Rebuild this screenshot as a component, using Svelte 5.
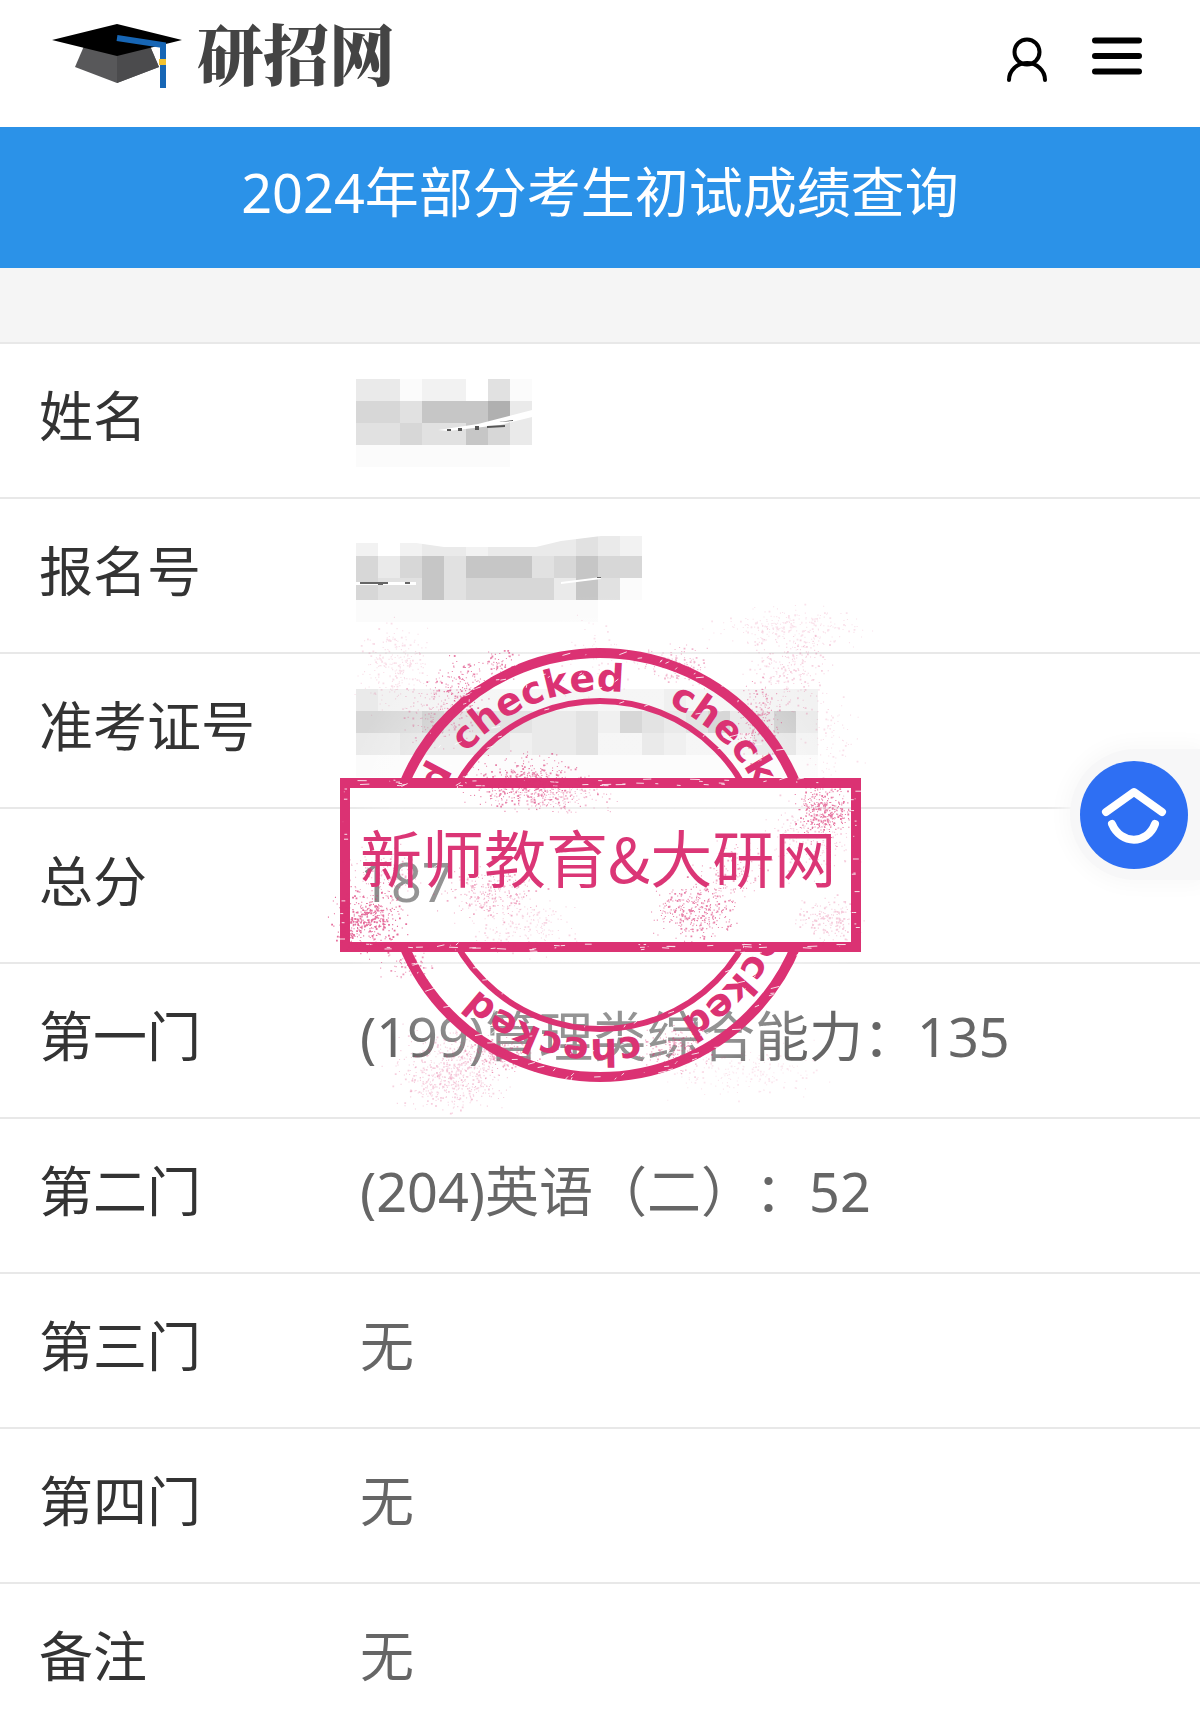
<script lang="ts">
	type Mosaic = { cells: string[]; name: string };
	type Row = { label: string; value?: string; mosaic?: Mosaic };

	// Each letter is one shade of the pixelated block, '.' is left empty
	const shades: Record<string, string> = {
		a: '#fbfbfb',
		b: '#f2f2f2',
		c: '#eaeaea',
		d: '#e1e1e1',
		e: '#d7d7d7',
		f: '#c6c6c6',
		g: '#b0b0b0'
	};

	const rows: Row[] = [
		{ label: '姓名', mosaic: { name: 'short', cells: ['ccabb.da', 'eedfffgc', 'ddeddfec', 'aaaaaaa.'] } },
		{ label: '报名号', mosaic: { name: 'medium', cells: ['b.bccbccccdcb', 'ecefdfffdefee', 'eddfdeeeecfda', 'aaaaaaaaaaa..'] } },
		{ label: '准考证号', mosaic: { name: 'long', cells: ['cbbbbbbbbbbbbbcbbbbbb', 'eeefeeeeddecfedefddfc', 'ccdddddcddebbdcbbbddb', 'aaaaaaaaaaaaaaaaaaaaa'] } },
		{ label: '总分', value: '187' },
		{ label: '第一门', value: '(199)管理类综合能力：135' },
		{ label: '第二门', value: '(204)英语（二）：52' },
		{ label: '第三门', value: '无' },
		{ label: '第四门', value: '无' },
		{ label: '备注', value: '无' }
	];

	const ringAngles = [-50, 23, 95, 167, 245];

	let seed = 20240;
	function random() {
		seed = (seed * 1664525 + 1013904223) % 4294967296;
		return seed / 4294967296;
	}

	function spread() {
		return (random() + random() + random()) / 1.5 - 1;
	}

	// x, y, rx, ry, number of dots, opacity
	const clouds = [
		[140, 95, 40, 40, 140, 0.6],
		[178, 74, 30, 24, 60, 0.6],
		[75, 75, 50, 55, 260, 0.16],
		[120, 125, 50, 45, 180, 0.3],
		[207, 192, 75, 38, 420, 0.6],
		[240, 205, 70, 24, 200, 0.35],
		[275, 60, 60, 60, 70, 0.15],
		[355, 75, 44, 26, 140, 0.35],
		[470, 36, 100, 26, 280, 0.14],
		[470, 80, 55, 60, 260, 0.22],
		[438, 130, 30, 50, 180, 0.45],
		[510, 150, 40, 60, 90, 0.15],
		[504, 220, 36, 42, 360, 0.65],
		[490, 245, 60, 60, 200, 0.25],
		[48, 330, 44, 42, 420, 0.7],
		[65, 285, 50, 40, 150, 0.35],
		[170, 303, 65, 34, 240, 0.4],
		[200, 335, 80, 40, 200, 0.2],
		[375, 320, 56, 42, 360, 0.6],
		[410, 280, 44, 36, 120, 0.4],
		[90, 375, 35, 24, 70, 0.5],
		[510, 330, 46, 28, 180, 0.25],
		[135, 475, 70, 55, 380, 0.24],
		[130, 490, 80, 40, 260, 0.22],
		[182, 465, 50, 22, 180, 0.4],
		[360, 460, 54, 34, 200, 0.45],
		[425, 480, 100, 34, 220, 0.12]
	];

	const splatter = clouds.map(([x, y, rx, ry, count, opacity]) => {
		let d = '';
		for (let i = 0; i < count; i++) {
			const px = (x + spread() * rx).toFixed(1);
			const py = (y + spread() * ry).toFixed(1);
			const size = random() > 0.8 ? 1.8 : 1.1;
			d += `M${px} ${py}h${size}v${size}h-${size}z`;
		}
		return { d, opacity };
	});

	function scratches() {
		let d = '';
		for (let i = 0; i < 70; i++) {
			const x = 24 + random() * 505;
			const y = (random() > 0.5 ? 189 : 354) + random() * 7;
			d += `M${x.toFixed(1)} ${y.toFixed(1)}l${(random() * 10).toFixed(1)} ${(random() - 0.5).toFixed(1)}`;
		}
		for (let i = 0; i < 24; i++) {
			const x = (random() > 0.5 ? 20 : 531) + random() * 5;
			const y = 195 + random() * 155;
			d += `M${x.toFixed(1)} ${y.toFixed(1)}h${(random() * 6).toFixed(1)}`;
		}
		for (let i = 0; i < 190; i++) {
			const angle = random() * Math.PI * 2;
			const band = random();
			const r = band > 0.6 ? 209 + random() * 8 : band > 0.4 ? 162 + random() * 4 : 174 + random() * 28;
			const x = 280 + Math.cos(angle) * r;
			const y = 275 + Math.sin(angle) * r;
			d += `M${x.toFixed(1)} ${y.toFixed(1)}l${(random() * 9).toFixed(1)} -${(random() * 3).toFixed(1)}`;
		}
		return d;
	}

	const scratchPath = scratches();
</script>

<div class="page">
	<header class="topbar">
		<a class="brand" href="/" aria-label="研招网">
			<svg class="cap" viewBox="0 0 130 66" aria-hidden="true">
				<path d="M32 23 23 44l42 16 42-16-9-21z" fill="#58585a" />
				<path d="M65 30v30l42-16-9-21z" fill="#4b4b4d" />
				<path d="M65 1 0 17l65 16 65-16z" fill="#000" />
				<path d="m65 15 46 7v43" fill="none" stroke="#1766b5" stroke-width="6" />
				<path d="M107 36h7v6h-7z" fill="#f2c230" />
			</svg>
			<span class="brand-name">研招网</span>
		</a>
		<nav class="actions">
			<button class="icon-button" aria-label="用户">
				<svg class="user" viewBox="0 0 42 46" fill="none" stroke="#000" stroke-width="4" stroke-linecap="round" aria-hidden="true">
					<circle cx="21" cy="15" r="12.5" />
					<path d="M3 43a18 17 0 0 1 36 0" />
				</svg>
			</button>
			<button class="icon-button" aria-label="菜单">
				<svg class="menu" viewBox="0 0 50 38" stroke="#000" stroke-width="6" stroke-linecap="round" aria-hidden="true">
					<path d="M3 3.5h44M3 19h44M3 34.5h44" />
				</svg>
			</button>
		</nav>
	</header>

	<h1 class="title">2024年部分考生初试成绩查询</h1>

	<main class="result">
		<table class="scores">
			<tbody>
				{#each rows as row}
					<tr>
						<th scope="row">{row.label}</th>
						<td>
							{#if row.mosaic}
								<div class="mosaic {row.mosaic.name}">
									{#each row.mosaic.cells as line}
										<div class="mosaic-line">
											{#each line as cell}
												<span class="cell" style:background={shades[cell]}></span>
											{/each}
										</div>
									{/each}
									{#if row.mosaic.name === 'short'}
										<svg class="tear" viewBox="0 0 180 90" aria-hidden="true">
											<path d="m82 51 40-6 58-15v7l-36 9-52 6z" fill="#fff" />
											<path d="M91 50h4v2h-4zM102 49h4v3h-4zM119 47h4v4h-4zM131 47l18-1v2l-18 1zM142 43l15-2v1z" fill="#555" />
										</svg>
									{:else if row.mosaic.name === 'medium'}
										<svg class="tear" viewBox="0 0 290 90" aria-hidden="true">
											<path d="M0 0v9h60l28 4h92l25-6 40-5h45v-2z" fill="#fff" />
											<path d="M0 48h60v3H0zM205 48l40-5v2l-40 5z" fill="#fff" />
											<path d="M4 48h28v2H4zM49 48h5v2h-5zM22 50h5v1h-5zM241 43h4v1h-4z" fill="#666" />
										</svg>
									{/if}
								</div>
							{:else}
								{row.value}
							{/if}
						</td>
					</tr>
				{/each}
			</tbody>
		</table>

		<svg class="stamp" viewBox="0 0 560 550" role="img" aria-label="新师教育&大研网">
			<defs>
				<path id="ring-line" d="M280 101a174 174 0 0 1 0 348a174 174 0 0 1 0-348" />
				<clipPath id="outside-plate">
					<path clip-rule="evenodd" d="M0 0h560v550H0zM20 188h521v174H20z" />
				</clipPath>
				<radialGradient id="veil">
					<stop offset="0.8" stop-color="#fff" stop-opacity="0.3" />
					<stop offset="1" stop-color="#fff" stop-opacity="0" />
				</radialGradient>
			</defs>

			<circle cx="280" cy="275" r="270" fill="url(#veil)" />
			<g clip-path="url(#outside-plate)">
				<circle class="ring" cx="280" cy="275" r="212" stroke-width="10" />
				<circle class="ring" cx="280" cy="275" r="164" stroke-width="6" />
				{#each ringAngles as angle}
					<g transform="rotate({angle} 280 275)">
						<text class="ring-text"><textPath href="#ring-line">checked</textPath></text>
					</g>
				{/each}
			</g>
			<rect class="ring" x="25" y="193" width="511" height="164" stroke-width="10" />
			<path d={scratchPath} stroke="#fff" stroke-width="1" opacity="0.85" />
			{#each splatter as cloud}
				<path d={cloud.d} fill="#db3273" opacity={cloud.opacity} />
			{/each}
			<text class="plate-text" x="40" y="293">新师教育&amp;大研网</text>
		</svg>

		<div class="floating">
			<button class="assist" aria-label="返回顶部">
				<svg viewBox="0 0 108 108" fill="none" stroke="#fff" stroke-width="8" stroke-linecap="round" stroke-linejoin="round" aria-hidden="true">
					<path d="m26 51 28-20 28 20" />
					<path d="M32 63c9 21 35 21 43 0" />
				</svg>
			</button>
		</div>
	</main>
</div>

<style>
	:global(body) {
		margin: 0;
		background: #fff;
	}

	.page {
		font-family: "Noto Sans", "Noto Sans CJK SC", sans-serif;
		color: #333;
		overflow: hidden;
		text-spacing-trim: space-all;
	}

	.topbar {
		display: flex;
		align-items: center;
		justify-content: space-between;
		box-sizing: border-box;
		height: 127px;
		padding: 0 58px 16px 52px;
	}

	.brand {
		display: flex;
		align-items: center;
		gap: 15px;
		color: #444;
		text-decoration: none;
	}

	.cap {
		width: 130px;
		height: 66px;
	}

	.brand-name {
		padding-bottom: 8px;
		font-family: "Noto Serif CJK SC", "Noto Sans CJK SC", serif;
		font-size: 66px;
		font-weight: 900;
		line-height: 80px;
	}

	.actions {
		display: flex;
		align-items: center;
		gap: 44px;
	}

	.icon-button {
		display: flex;
		padding: 0;
		border: 0;
		background: none;
		cursor: pointer;
	}

	.user {
		width: 42px;
		height: 46px;
		padding-top: 8px;
	}

	.menu {
		width: 50px;
		height: 38px;
	}

	.title {
		box-sizing: border-box;
		height: 141px;
		margin: 0;
		padding-top: 25px;
		background: #2b92e8;
		color: #fff;
		font-size: 54px;
		font-weight: 400;
		line-height: 80px;
		text-align: center;
	}

	.result {
		position: relative;
		padding-top: 74px;
		background: #f5f5f5;
	}

	.scores {
		width: 100%;
		border-collapse: separate;
		border-spacing: 0;
		background: #fff;
		font-size: 54px;
		line-height: 80px;
	}

	th,
	td {
		box-sizing: border-box;
		height: 155px;
		padding: 0 0 10px;
		border-top: 2px solid #e8e8e8;
		font-weight: 400;
		text-align: left;
		vertical-align: middle;
	}

	tr:last-child > * {
		height: 147px;
		padding-bottom: 2px;
	}

	th {
		width: 356px;
		padding-left: 39px;
		color: #333;
	}

	td {
		padding-left: 4px;
		color: #666;
	}

	.mosaic {
		position: relative;
		margin: 14px 0 0 -4px;
	}

	.mosaic-line {
		display: flex;
	}

	.cell {
		width: 22px;
		height: 22px;
	}

	.tear {
		position: absolute;
		top: 0;
		left: 0;
		height: 90px;
	}

	.stamp {
		position: absolute;
		top: 322px;
		left: 50%;
		width: 560px;
		height: 550px;
		transform: translateX(-50%);
		pointer-events: none;
	}

	.ring {
		fill: none;
		stroke: #db3273;
	}

	.ring-text {
		fill: #db3273;
		font-family: "DejaVu Sans", sans-serif;
		font-size: 38px;
		font-weight: 700;
	}

	.plate-text {
		fill: #db3676;
		font-family: "Noto Sans CJK SC", sans-serif;
		font-size: 62px;
	}

	.floating {
		position: absolute;
		top: 481px;
		right: 0;
		box-sizing: border-box;
		width: 130px;
		height: 131px;
		padding: 12px 12px 0 10px;
		border-radius: 66px 0 0 66px;
		background: #f7f7f8;
		box-shadow: 0 0 20px 6px #f9f9f9;
	}

	.assist {
		display: block;
		width: 108px;
		height: 108px;
		padding: 0;
		border: 0;
		border-radius: 50%;
		background: #2e6ff3;
		cursor: pointer;
	}
</style>
